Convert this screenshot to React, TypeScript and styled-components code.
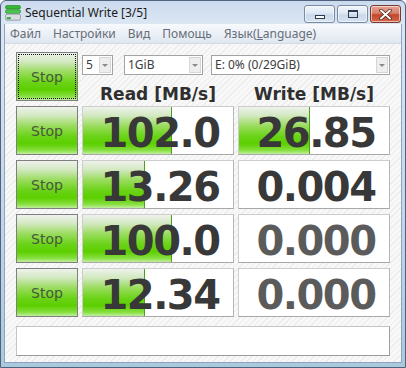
import React from "react";
import styled, { createGlobalStyle } from "styled-components";

const Global = createGlobalStyle`
  html, body { margin: 0; padding: 0; background: #ffffff; }
  body { width: 406px; height: 368px; overflow: hidden; }
  * { box-sizing: border-box; }
`;

const GREEN = `linear-gradient(to bottom, #eff2ec 0%, #d3e9c2 18%, #9bdc5f 40%, #6bd318 62%, #5ccf00 78%, #86df3e 92%, #c2efa0 100%)`;

const Window = styled.div`
  width: 406px;
  height: 368px;
  display: flex;
  flex-direction: column;
  background: linear-gradient(to bottom, #cbdaee 0px, #dbe6f3 22px, #c3d5ea 60%, #a9c9dc 100%);
  border: 1px solid #50627c;
  border-radius: 6px 6px 0 0;
  padding: 0 3px 4px 3px;
`;

const TitleBar = styled.div`
  height: 23px;
  display: flex;
  align-items: flex-start;
  padding: 3px 1px 0 1px;
`;

const TitleIcon = styled.svg`
  width: 16px;
  height: 16px;
  margin-top: 1px;
  flex: none;
`;

const TitleText = styled.div`
  font: 12px "Noto Sans", "DejaVu Sans", sans-serif;
  color: #1b1b1b;
  margin-left: 4px;
  line-height: 18px;
  flex: 1;
`;

const WinButtons = styled.div`
  display: flex;
  gap: 2px;
  margin-top: 1px;
`;

const WinButton = styled.div<{ $close?: boolean }>`
  width: 31px;
  height: 18px;
  border: 1px solid ${(p) => (p.$close ? "#7a3a30" : "#7889a2")};
  border-radius: 3px;
  display: flex;
  align-items: center;
  justify-content: center;
  background: ${(p) =>
    p.$close
      ? "linear-gradient(to bottom, #e6a393 0%, #d8806b 45%, #c1462c 55%, #d56a4c 100%)"
      : "linear-gradient(to bottom, #f1f5fa 0%, #dfe8f3 45%, #cad8ea 55%, #d8e3f0 100%)"};
  box-shadow: inset 0 0 0 1px rgba(255, 255, 255, 0.55);
`;

const MinGlyph = styled.div`
  width: 10px;
  height: 4px;
  border: 1px solid #2d3b52;
  background: #ffffff;
  margin-top: 6px;
`;

const MaxGlyph = styled.div`
  width: 10px;
  height: 8px;
  border: 1px solid #2d3b52;
  border-top-width: 2px;
  background: transparent;
`;

const Client = styled.div`
  flex: 1;
  display: flex;
  flex-direction: column;
  border: 1px solid #8ea4bf;
  border-top: none;
`;

const MenuBar = styled.div`
  height: 20px;
  display: flex;
  align-items: center;
  padding-left: 0;
  background: linear-gradient(to bottom, #f7f9fc 0%, #eaeff6 60%, #dfe6ef 100%);
  border-bottom: 1px solid #d2dae5;
`;

const MenuItem = styled.div`
  font: 12px "Noto Sans", "DejaVu Sans", sans-serif;
  color: #666d76;
  padding: 0 7px 0 5px;
  line-height: 18px;
  white-space: nowrap;
`;

const Mnemonic = styled.span`
  text-decoration: underline;
`;

const Body = styled.div`
  flex: 1;
  background: repeating-linear-gradient(135deg, #f8f8f8 0px, #f8f8f8 3px, #ececec 3px, #ececec 4px);
  padding: 8px 0 0 11px;
  display: flex;
  flex-direction: column;
`;

const Grid = styled.div`
  display: grid;
  grid-template-columns: 62px 152px 152px;
  grid-auto-rows: 49px;
  column-gap: 4px;
  row-gap: 5px;
`;

const StopButton = styled.div<{ $focused?: boolean }>`
  position: relative;
  border: 1px solid #7f7f7f;
  background: ${GREEN};
  display: flex;
  align-items: center;
  justify-content: center;
  font: 14px "DejaVu Sans", sans-serif;
  color: #46593a;
  padding-top: 1px;
  &::after {
    content: "";
    position: absolute;
    inset: 1px;
    border: 1px dotted ${(p) => (p.$focused ? "#111" : "transparent")};
  }
`;

const TopPanel = styled.div`
  grid-column: 2 / span 2;
  display: flex;
  flex-direction: column;
`;

const ComboRow = styled.div`
  display: flex;
  margin-top: 3px;
  height: 20px;
`;

const Combo = styled.div<{ $w: number; $ml: number }>`
  width: ${(p) => p.$w}px;
  margin-left: ${(p) => p.$ml}px;
  height: 20px;
  background: #ffffff;
  border: 1px solid #a3a3a3;
  display: flex;
  align-items: stretch;
`;

const ComboText = styled.div`
  flex: 1;
  font: 12px "Noto Sans", "DejaVu Sans", sans-serif;
  color: #3c3c3c;
  line-height: 18px;
  padding-left: 3px;
  white-space: nowrap;
  overflow: hidden;
`;

const ComboArrow = styled.div`
  width: 12px;
  margin: 1px;
  background: #eeeeee;
  border: 1px solid #d6d6d6;
  display: flex;
  align-items: center;
  justify-content: center;
  &::before {
    content: "";
    border-left: 3px solid transparent;
    border-right: 3px solid transparent;
    border-top: 3px solid #8a8a8a;
  }
`;

const HeaderRow = styled.div`
  display: grid;
  grid-template-columns: 152px 152px;
  column-gap: 4px;
  margin-top: 9px;
`;

const Header = styled.div`
  font: bold 17px "DejaVu Sans", sans-serif;
  color: #2f2f2f;
  line-height: 20px;
  text-align: center;
  white-space: nowrap;
`;

const ValueCell = styled.div`
  position: relative;
  background: #ffffff;
  border: 1px solid #cdcdcd;
  border-right-color: #b6b6b6;
  border-bottom-color: #a8a8a8;
  overflow: hidden;
  display: flex;
  align-items: center;
  justify-content: center;
`;

const Fill = styled.div`
  position: absolute;
  left: 0;
  top: 0;
  bottom: 0;
  background: ${GREEN};
  border-right: 1px solid #4f9e1c;
`;

const Value = styled.span<{ $dim?: boolean }>`
  position: relative;
  font: bold 40px "DejaVu Sans", sans-serif;
  letter-spacing: -1.5px;
  line-height: 1;
  padding-top: 4px;
  margin-left: 4px;
  color: ${(p) => (p.$dim ? "#5b5b5b" : "#383838")};
`;

const Comment = styled.div`
  width: 374px;
  height: 30px;
  margin-top: 9px;
  background: #ffffff;
  border: 1px solid #c4c4c4;
  border-right-color: #a0a0a0;
  border-bottom-color: #9a9a9a;
`;

type Row = { read: string; readPct: number; write: string; writePct: number };

const rows: Row[] = [
  { read: "102.0", readPct: 59.2, write: "26.85", writePct: 47.4 },
  { read: "13.26", readPct: 41.4, write: "0.004", writePct: 0 },
  { read: "100.0", readPct: 59.2, write: "0.000", writePct: 0 },
  { read: "12.34", readPct: 41.4, write: "0.000", writePct: 0 },
];

const Cell: React.FC<{ value: string; pct: number }> = ({ value, pct }) => (
  <ValueCell>
    {pct > 0 && <Fill style={{ width: `${pct}%` }} />}
    <Value $dim={value === "0.000"}>{value}</Value>
  </ValueCell>
);

export default function App() {
  return (
    <>
      <Global />
      <Window>
        <TitleBar>
          <TitleIcon viewBox="0 0 16 16">
            <rect x="0.5" y="0.5" width="15" height="3.5" rx="1.5" fill="#35b835" stroke="#1f7d1f" strokeWidth="0.6" />
            <rect x="0.5" y="4.8" width="15" height="3.5" rx="1.5" fill="#4cc94c" stroke="#1f7d1f" strokeWidth="0.6" />
            <rect x="0.5" y="9.2" width="15" height="6" rx="1.5" fill="#d9dde2" stroke="#6f7780" strokeWidth="0.6" />
            <rect x="1.8" y="12.2" width="4" height="2" fill="#2fa52f" />
          </TitleIcon>
          <TitleText>Sequential Write [3/5]</TitleText>
          <WinButtons>
            <WinButton>
              <MinGlyph />
            </WinButton>
            <WinButton>
              <MaxGlyph />
            </WinButton>
            <WinButton $close>
              <svg width="13" height="11" viewBox="0 0 13 11">
                <path d="M2 1.5 L11 9.5 M11 1.5 L2 9.5" stroke="#4a1c14" strokeWidth="3.4" strokeLinecap="round" />
                <path d="M2 1.5 L11 9.5 M11 1.5 L2 9.5" stroke="#ffffff" strokeWidth="2" strokeLinecap="round" />
              </svg>
            </WinButton>
          </WinButtons>
        </TitleBar>
        <Client>
          <MenuBar>
            <MenuItem>Файл</MenuItem>
            <MenuItem>Настройки</MenuItem>
            <MenuItem>Вид</MenuItem>
            <MenuItem>Помощь</MenuItem>
            <MenuItem>
              Язык(<Mnemonic>L</Mnemonic>anguage)
            </MenuItem>
          </MenuBar>
          <Body>
            <Grid>
              <StopButton $focused>Stop</StopButton>
              <TopPanel>
                <ComboRow>
                  <Combo $w={31} $ml={0}>
                    <ComboText>5</ComboText>
                    <ComboArrow />
                  </Combo>
                  <Combo $w={79} $ml={11}>
                    <ComboText>1GiB</ComboText>
                    <ComboArrow />
                  </Combo>
                  <Combo $w={179} $ml={8}>
                    <ComboText>E: 0% (0/29GiB)</ComboText>
                    <ComboArrow />
                  </Combo>
                </ComboRow>
                <HeaderRow>
                  <Header>Read [MB/s]</Header>
                  <Header>Write [MB/s]</Header>
                </HeaderRow>
              </TopPanel>
              {rows.map((r, i) => (
                <React.Fragment key={i}>
                  <StopButton>Stop</StopButton>
                  <Cell value={r.read} pct={r.readPct} />
                  <Cell value={r.write} pct={r.writePct} />
                </React.Fragment>
              ))}
            </Grid>
            <Comment />
          </Body>
        </Client>
      </Window>
    </>
  );
}
